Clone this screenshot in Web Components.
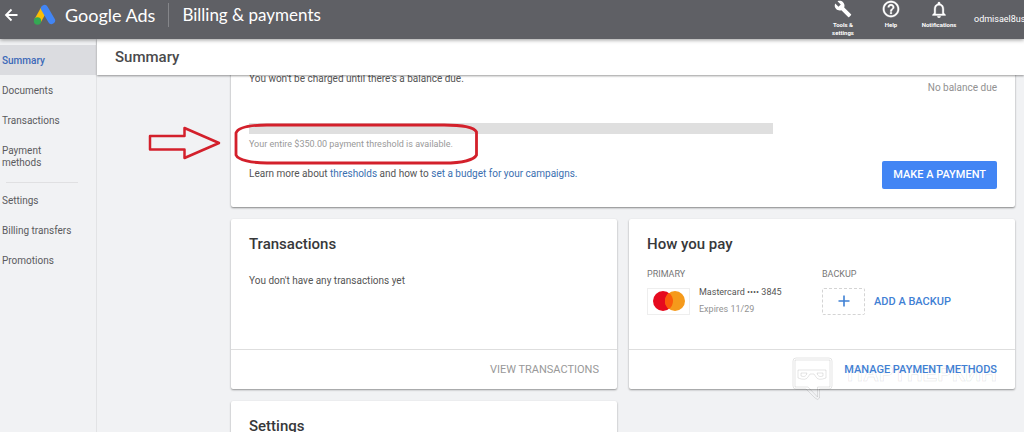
<!DOCTYPE html>
<html lang="en">
<head>
<meta charset="utf-8">
<title>Billing &amp; payments</title>
<style>
  html, body { margin: 0; height: 100%; }
  body { font-family: Roboto, "Liberation Sans", sans-serif; color: #555; background: #f1f2f4; overflow: hidden; }
</style>
</head>
<body>
<billing-app></billing-app>
<script>
const define = (name, html) => {
  const t = document.createElement('template');
  t.innerHTML = html;
  customElements.define(name, class extends HTMLElement {
    constructor() {
      super();
      this.attachShadow({ mode: 'open' }).appendChild(t.content.cloneNode(true));
    }
  });
};

define('ads-logo', `
<style>:host{display:block} svg{display:block}</style>
<svg width="24" height="22" viewBox="0 0 24 22" aria-hidden="true">
  <path d="M11.5 4.500 4.500 17" stroke="#fbbc04" stroke-width="7"/>
  <path d="M11.500 4.500 18.500 16.500" stroke="#4285f4" stroke-width="7.200" stroke-linecap="round"/>
  <circle cx="4.500" cy="17" r="3.700" fill="#34a853"/>
</svg>`);

define('header-action', `
<style>
  :host{display:block;width:48px}
  button{all:unset;box-sizing:border-box;width:100%;display:flex;flex-direction:column;align-items:center;gap:3px;
    color:#fff;font-size:6px;font-weight:700;line-height:8px;text-align:center;cursor:pointer}
  span{max-width:40px}
</style>
<button type="button"><slot name="icon"></slot><span><slot></slot></span></button>`);

define('app-header', `
<style>
  :host{display:flex;align-items:flex-start;box-sizing:border-box;height:39px;background:#5f6065;color:#fff;
    position:relative;z-index:3;box-shadow:0 1px 4px rgba(0,0,0,.4)}
  .brand{display:flex;align-items:center;height:30px;padding-left:4px;font-family:Lato,Roboto,sans-serif;font-size:18px;line-height:30px;white-space:nowrap}
  .back{all:unset;display:block;cursor:pointer}
  svg{display:block}
  ads-logo{margin:0 8px 0 15px}
  i{width:1px;height:24px;background:#85868a;margin:0 13px}
  h1{font:inherit;font-size:17px;margin:0}
  nav{display:flex;margin-left:auto}
  .account{width:61px;padding:12px 0 0 11px;font-size:9px;line-height:14px;white-space:nowrap;box-sizing:border-box}
</style>
<div class="brand">
  <button class="back" aria-label="Back"><svg width="14" height="14" viewBox="0 0 14 14" fill="none" stroke="#fff" stroke-width="1.800"><path d="M13.500 7H2M7.500 1.500 2 7l5.500 5.500"/></svg></button>
  <ads-logo></ads-logo><span>Google Ads</span><i></i><h1>Billing &amp; payments</h1>
</div>
<nav aria-label="Tools">
  <header-action><svg slot="icon" width="18" height="18" viewBox="0 0 24 24" fill="#fff"><path d="M22.700 19l-9.100-9.100c.9-2.300.4-5-1.500-6.900-2-2-5-2.400-7.400-1.300L9 6 6 9 1.600 4.700C.4 7.100.9 10.100 2.900 12.100c1.900 1.900 4.600 2.400 6.900 1.500l9.100 9.100c.4.4 1 .4 1.400 0l2.300-2.300c.5-.4.5-1.100.1-1.400z"/></svg>Tools &amp; settings</header-action>
  <header-action><svg slot="icon" width="18" height="18" viewBox="1 1 22 22" fill="#fff" stroke="#fff" stroke-width=".4"><path d="M11 18h2v-2h-2v2zm1-16C6.480 2 2 6.480 2 12s4.480 10 10 10 10-4.480 10-10S17.520 2 12 2zm0 18c-4.410 0-8-3.590-8-8s3.590-8 8-8 8 3.590 8 8-3.590 8-8 8zm0-14c-2.210 0-4 1.790-4 4h2c0-1.100.9-2 2-2s2 .9 2 2c0 2-3 1.750-3 5h2c0-2.250 3-2.500 3-5 0-2.210-1.790-4-4-4z"/></svg>Help</header-action>
  <header-action><svg slot="icon" width="18" height="18" viewBox="1 0 22 22" fill="#fff" stroke="#fff" stroke-width=".4"><path d="M12 22c1.100 0 2-.9 2-2h-4c0 1.100.9 2 2 2zm6-6v-5c0-3.070-1.630-5.640-4.500-6.320V4c0-.83-.67-1.500-1.500-1.500s-1.500.67-1.500 1.500v.68C7.640 5.360 6 7.920 6 11v5l-2 2v1h16v-1l-2-2zm-2 1H8v-6c0-2.480 1.510-4.500 4-4.500s4 2.020 4 4.500v6z"/></svg>Notifications</header-action>
</nav>
<div class="account">odmisael8us</div>`);

define('side-nav', `
<style>
  :host{display:block;box-sizing:border-box;width:97px;padding-top:6px;border-right:1px solid #e2e3e5;background:#f1f2f4}
  a{display:block;padding:10px 40px 8px 2px;font-size:10px;line-height:12px;color:#5b5b5e;text-decoration:none}
  a.wide{padding-right:0}
  a[aria-current]{background:#dbdce0;color:#3c69b8;font-weight:500;padding-right:0}
  hr{border:0;border-top:1px solid #e0e0e2;margin:5px 18px 2px 6px}
</style>
<nav aria-label="Billing">
  <a href="#" aria-current="page">Summary</a>
  <a href="#" class="wide">Documents</a>
  <a href="#" class="wide">Transactions</a>
  <a href="#">Payment methods</a>
  <hr>
  <a href="#" class="wide">Settings</a>
  <a href="#" class="wide">Billing transfers</a>
  <a href="#" class="wide">Promotions</a>
</nav>`);

define('info-card', `
<style>
  :host{display:flex;flex-direction:column;background:#fff;border-radius:2px;box-shadow:0 1px 2px rgba(0,0,0,.4);position:relative;box-sizing:border-box;min-height:170px}
  .body{flex:1;padding:16px 18px}
  h2{margin:0;font-size:15px;line-height:18px;font-weight:500;color:#37383a}
  .foot{border-top:1px solid #dedede;height:39px;display:flex;align-items:center;justify-content:flex-end;padding:0 18px}
  :host([nofoot]) .foot{display:none}
</style>
<div class="body"><h2><slot name="title"></slot></h2><slot></slot></div>
<div class="foot"><slot name="action"></slot></div>`);

define('callout-marks', `
<style>
  :host{display:block;position:absolute;left:-101px;top:-12px;pointer-events:none}
  svg{display:block}
</style>
<svg width="332" height="44" viewBox="0 0 332 44" fill="none" stroke="#d3202b" aria-hidden="true">
  <path stroke-width="2.500" stroke-linejoin="round" d="M2 14H36.500V6L71 21 36.500 36V27.500H2Z"/>
  <path stroke-width="2.800" d="M88 11C90 5 104 3 119 3H296C314 3 326 5 328.500 10V33C326 38 314 41 296 41H119C104 41 90 38 88 33Z"/>
</svg>`);

define('balance-card', `
<style>
  :host{display:grid;grid-template-columns:minmax(0,524fr) minmax(0,224fr);box-sizing:border-box;padding:6px 18px 18px;background:#fff;border-radius:2px;
    box-shadow:0 1px 2px rgba(0,0,0,.45);font-size:10px;line-height:16px}
  p{margin:0}
  .bar{height:11px;background:#dfdfdf;margin-top:36px}
  .note{position:relative;color:#999;font-size:9px;padding-top:2px}
  .learn{margin:14px 0 7px;white-space:nowrap}
  a{color:#3a6fb0;text-decoration:none}
  .side{display:flex;flex-direction:column;align-items:flex-end;justify-content:space-between;padding-top:9px;color:#919191}
  button{border:0;border-radius:2px;background:#4285f4;color:#fff;font:500 11px/16px Roboto,sans-serif;padding:6px 11px;cursor:pointer}
</style>
<div>
  <p>You won't be charged until there's a balance due.</p>
  <div class="bar"></div>
  <p class="note">Your entire $350.00 payment threshold is available.<callout-marks></callout-marks></p>
  <p class="learn">Learn more about <a href="#">thresholds</a> and how to <a href="#">set a budget for your campaigns.</a></p>
</div>
<div class="side"><span>No balance due</span><button type="button">MAKE A PAYMENT</button></div>`);

define('pay-methods', `
<style>
  :host{display:grid;grid-template-columns:1fr 1fr;margin-top:15px;font-size:9px}
  h3{margin:0 0 3px;font-size:9px;line-height:13px;font-weight:400;color:#777}
  .row{display:flex;align-items:center;gap:9px}
  .thumb,.add{box-sizing:border-box;width:43px;height:27px;display:grid;place-items:center;border:1px solid #eee;flex:none}
  .add{border:1px dashed #d4d4d4;border-radius:2px}
  p{margin:0;line-height:17px;white-space:nowrap}
  .exp{color:#939393}
  button{all:unset;display:flex;align-items:center;gap:9px;cursor:pointer;color:#3f80d4;font-size:11px;min-height:34px;font-weight:500;white-space:nowrap}
  svg{display:block}
</style>
<section><h3>PRIMARY</h3><div class="row">
  <span class="thumb"><svg width="32" height="20" viewBox="0 0 32 20" aria-hidden="true"><circle cx="10" cy="10" r="10" fill="#e60a1e"/><circle cx="22" cy="10" r="10" fill="#f59a1b"/><path d="M16 2a10 10 0 0 1 0 16 10 10 0 0 1 0-16z" fill="#fb5b0b"/></svg></span>
  <div><p>Mastercard •••• 3845</p><p class="exp">Expires 11/29</p></div></div></section>
<section><h3>BACKUP</h3><button type="button"><span class="add"><svg width="12" height="12" viewBox="0 0 12 12" stroke="#3f80d4" stroke-width="1.600"><path d="M6 0.500V11.500M0.500 6H11.500"/></svg></span>ADD A BACKUP</button></section>`);

define('water-mark', `
<style>
  :host{display:flex;align-items:flex-start;gap:13px;position:absolute;right:18px;bottom:-12px;pointer-events:none}
  svg{display:block}
  span{font:700 22px/34px "Liberation Sans",sans-serif;color:transparent;-webkit-text-stroke:1px rgba(0,0,0,.08)}
</style>
<svg width="42" height="44" viewBox="0 0 42 44" fill="none" stroke="rgba(0,0,0,.1)" stroke-width="1" aria-hidden="true">
  <path d="M4 1H37Q40 1 40 4V29Q40 32 37 32H27.500V41Q26 44 23 41L14 32H4Q1 32 1 29V4Q1 1 4 1Z"/><path d="M3 3H38V30H25.500V40L16 30H3Z"/>
  <path d="M6 13H34V21Q26 24 24 20L22 17H18L16 20Q14 24 6 21ZM9 16H15Q14 21 9 19ZM25 16H31V19Q26 21 25 16Z"/>
</svg><span>ПАРТНЕРКИН</span>`);

define('billing-app', `
<style>
  :host{display:flex;flex-direction:column;height:100vh;overflow:hidden}
  .main{display:flex;flex:1;min-height:0}
  .page{flex:1;min-width:0;display:flex;flex-direction:column}
  .title{position:relative;z-index:2;background:#fff;height:36px;flex:none;display:flex;align-items:center;padding-left:18px;box-shadow:0 1px 2px rgba(0,0,0,.4)}
  .title h2{margin:0;font-size:15px;line-height:18px;font-weight:500;color:#4a4a4c}
  .scroll{flex:1;min-height:0;overflow:hidden}
  .cards{display:grid;grid-template-columns:1fr 1fr;gap:12px;margin:-10px 9px 0 134px}
  balance-card{grid-column:1/3}
  .empty{margin:20px 0 0;font-size:10px;line-height:16px}
  .act{all:unset;font-size:11px;line-height:16px;cursor:pointer;color:#999;position:relative}
  .act.blue{color:#3f80d4;font-weight:500}
</style>
<app-header></app-header>
<div class="main">
  <side-nav></side-nav>
  <div class="page">
    <div class="title"><h2>Summary</h2></div>
    <div class="scroll"><div class="cards">
      <balance-card></balance-card>
      <info-card><span slot="title">Transactions</span><p class="empty">You don't have any transactions yet</p><button class="act" slot="action">VIEW TRANSACTIONS</button></info-card>
      <info-card><span slot="title">How you pay</span><pay-methods></pay-methods><water-mark slot="action"></water-mark><button class="act blue" slot="action">MANAGE PAYMENT METHODS</button></info-card>
      <info-card nofoot><span slot="title">Settings</span></info-card>
    </div></div>
  </div>
</div>`);
</script>
</body>
</html>
